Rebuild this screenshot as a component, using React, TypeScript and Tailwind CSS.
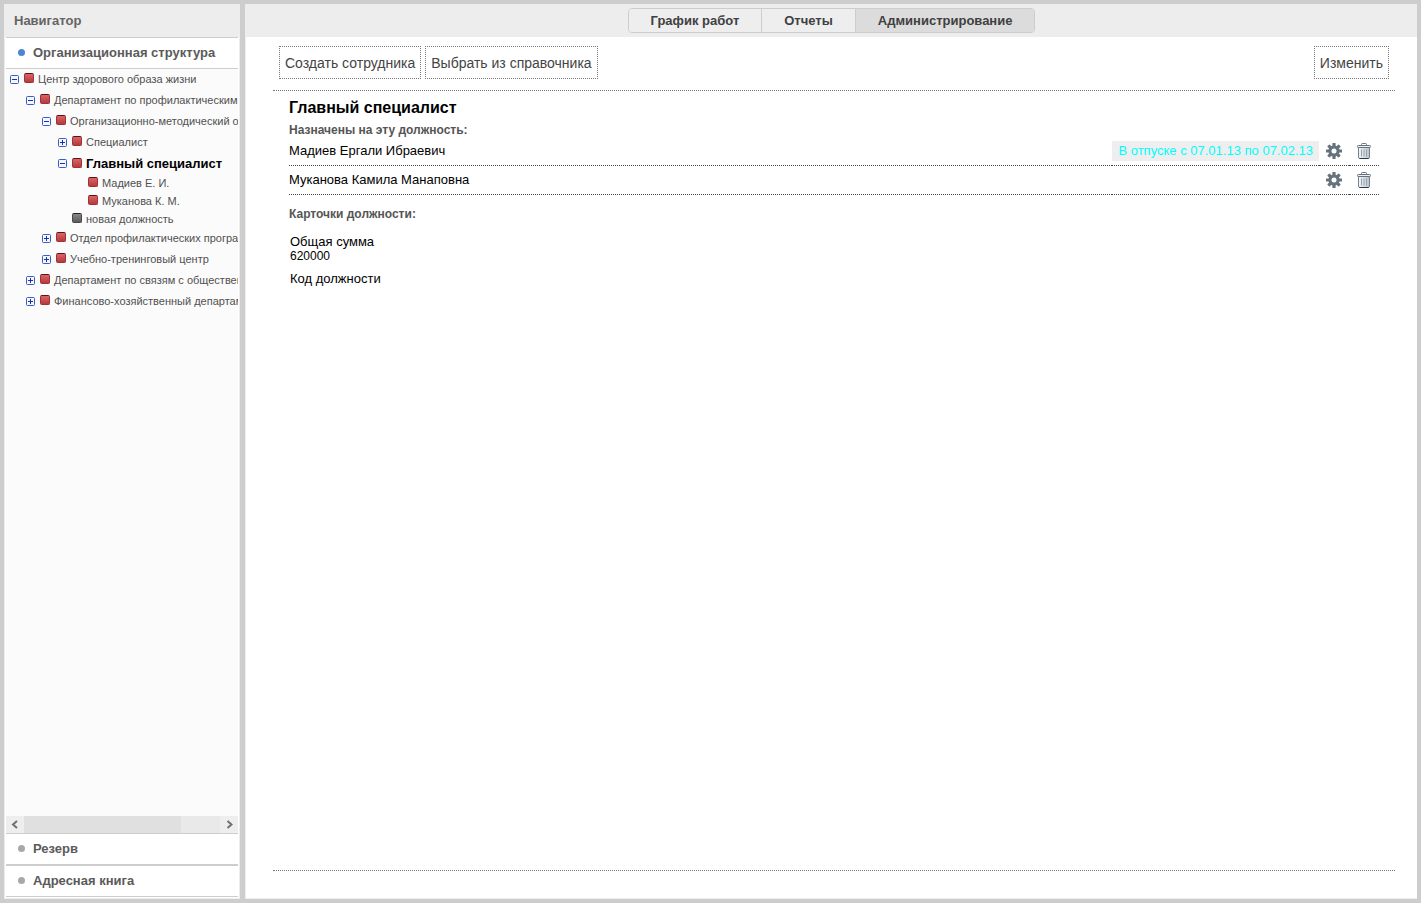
import { useState } from "react";

interface TreeNode {
  id: number;
  label: string;
  vacant?: boolean;
  leaf?: boolean;
  open?: boolean;
  children?: TreeNode[];
}

interface Employee {
  id: number;
  name: string;
  status: string | null;
}

const structure: TreeNode[] = [
  {
    id: 1,
    label: "Центр здорового образа жизни",
    open: true,
    children: [
      {
        id: 2,
        label: "Департамент по профилактическим программам",
        open: true,
        children: [
          {
            id: 3,
            label: "Организационно-методический отдел",
            open: true,
            children: [
              { id: 4, label: "Специалист" },
              {
                id: 5,
                label: "Главный специалист",
                open: true,
                children: [
                  { id: 6, label: "Мадиев Е. И.", leaf: true },
                  { id: 7, label: "Муканова К. М.", leaf: true },
                ],
              },
              { id: 8, label: "новая должность", leaf: true, vacant: true },
            ],
          },
          { id: 9, label: "Отдел профилактических программ" },
          { id: 10, label: "Учебно-тренинговый центр" },
        ],
      },
      { id: 11, label: "Департамент по связям с общественностью" },
      { id: 12, label: "Финансово-хозяйственный департамент" },
    ],
  },
];

const employees: Employee[] = [
  { id: 1, name: "Мадиев Ергали Ибраевич", status: "В отпуске с 07.01.13 по 07.02.13" },
  { id: 2, name: "Муканова Камила Манаповна", status: null },
];

const tabs = ["График работ", "Отчеты", "Администрирование"];

function GearIcon() {
  return (
    <svg width="16" height="16" viewBox="0 0 16 16" className="block">
      <g fill="#66727e">
        <rect x="6.4" y="0" width="3.2" height="16" rx="0.6" />
        <rect x="6.4" y="0" width="3.2" height="16" rx="0.6" transform="rotate(45 8 8)" />
        <rect x="6.4" y="0" width="3.2" height="16" rx="0.6" transform="rotate(90 8 8)" />
        <rect x="6.4" y="0" width="3.2" height="16" rx="0.6" transform="rotate(135 8 8)" />
        <circle cx="8" cy="8" r="5.6" />
      </g>
      <circle cx="8" cy="8" r="2.5" fill="#fff" />
    </svg>
  );
}

function TrashIcon() {
  return (
    <svg width="16" height="16" viewBox="0 0 16 16" className="block">
      <defs>
        <linearGradient id="bin" x1="0" x2="1" y1="0" y2="0">
          <stop offset="0" stopColor="#f6f8fa" />
          <stop offset="1" stopColor="#b8c2cc" />
        </linearGradient>
      </defs>
      <path d="M5.5 2.5V1.3Q5.5.5 6.300.5h3.400q.8 0 .8.8v1.200" fill="none" stroke="#6a7683" />
      <path d="M2.500 4.500h11V14q0 1.500-1.500 1.500H4q-1.500 0-1.500-1.500z" fill="url(#bin)" stroke="#75818d" />
      <path d="M3.500 15.500h9" stroke="#2c3948" />
      <rect x="1.500" y="2.500" width="13" height="2" rx="0.800" fill="#eef1f4" stroke="#66727e" />
      <path d="M5.500 6.500v7M8 6.500v7M10.500 6.500v7" stroke="#98a3ae" />
    </svg>
  );
}

function Expander({ open }: { open: boolean }) {
  return (
    <svg width="9" height="9" viewBox="0 0 9 9" className="block">
      <rect x="0.5" y="0.5" width="8" height="8" rx="1" fill="#f3f6fe" stroke="#3a5cc8" />
      <path d={open ? "M2 4.500h5" : "M2 4.500h5M4.500 2v5"} stroke="#1c3694" />
    </svg>
  );
}

function TreeItem({
  node,
  level,
  selected,
  onSelect,
}: {
  node: TreeNode;
  level: number;
  selected: number;
  onSelect: (id: number) => void;
}) {
  const [open, setOpen] = useState(!!node.open);
  const active = node.id === selected;

  return (
    <li>
      <div
        className={`flex items-center whitespace-nowrap pl-1 ${node.leaf ? "h-[18px]" : "h-[21px]"} ${
          node.leaf || active ? "" : "pb-px"
        }`}
        style={{ marginLeft: level * 16 }}
      >
        <span className="w-[14px] shrink-0">
          {!node.leaf && (
            <button className="block" aria-expanded={open} aria-label={node.label} onClick={() => setOpen(!open)}>
              <Expander open={open} />
            </button>
          )}
        </span>
        <span
          className={`mr-1 size-[10px] shrink-0 rounded-[2px] border bg-linear-to-b ${active ? "mb-px" : "mb-[3px]"} ${
            node.vacant
              ? "border-[#484848] border-t-[#222] from-[#888] to-[#5c5c5c]"
              : "border-[#a03236] border-t-[#5a1214] from-[#dc6464] to-[#b43a3e]"
          }`}
        />
        <button
          onClick={() => onSelect(node.id)}
          className={
            active ? "text-[13px] leading-4 font-bold text-black" : "text-[11px] leading-4 text-[#505050]"
          }
        >
          {node.label}
        </button>
      </div>
      {open && node.children && (
        <ul>
          {node.children.map((child) => (
            <TreeItem key={child.id} node={child} level={level + 1} selected={selected} onSelect={onSelect} />
          ))}
        </ul>
      )}
    </li>
  );
}

function SectionButton({ label, active = false }: { label: string; active?: boolean }) {
  return (
    <button className="flex h-8 w-full shrink-0 items-center gap-2 border-y border-[#cdcdcd] bg-white pl-3 text-[13px] font-bold text-[#5a5a5a]">
      <span className={`mb-0.5 size-[7px] rounded-full ${active ? "bg-[#4a86d4]" : "bg-[#a8a8a8]"}`} />
      {label}
    </button>
  );
}

function ScrollBar() {
  return (
    <div className="flex h-[17px] shrink-0 bg-[#e9e9e9]">
      <button aria-label="Влево" className="flex w-[18px] items-center justify-center bg-[#eee]">
        <svg width="8" height="9" viewBox="0 0 8 9">
          <path d="M6 1L2 4.500 6 8" fill="none" stroke="#707070" strokeWidth="2" />
        </svg>
      </button>
      <div className="flex-1">
        <div className="h-full w-4/5 bg-[#e0e0e0]" />
      </div>
      <button aria-label="Вправо" className="flex w-[18px] items-center justify-center bg-[#eee]">
        <svg width="8" height="9" viewBox="0 0 8 9">
          <path d="M2.500 1l4 3.500-4 3.500" fill="none" stroke="#707070" strokeWidth="2" />
        </svg>
      </button>
    </div>
  );
}

function ActionButton({ children }: { children: string }) {
  return (
    <button className="h-[33px] border border-dotted border-[#777] bg-white px-[5px] text-sm text-[#444]">
      {children}
    </button>
  );
}

export default function App() {
  const [selected, setSelected] = useState(5);
  const [tab, setTab] = useState(2);

  return (
    <div className="flex h-screen gap-[5px] bg-[#cdcdcd] p-1 font-['Liberation_Sans',Arial,sans-serif]">
      <aside className="flex w-[236px] shrink-0 flex-col border border-[#ededed] bg-white">
        <h2 className="h-8 shrink-0 bg-[#ededed] pl-[9px] text-[13px] leading-8 font-bold text-[#646464]">Навигатор</h2>
        <div className="flex min-h-0 flex-1 flex-col px-px pb-px">
          <SectionButton label="Организационная структура" active />
          <nav className="min-h-0 flex-1 overflow-hidden bg-[#fbfbfb]">
            <ul>
              {structure.map((node) => (
                <TreeItem key={node.id} node={node} level={0} selected={selected} onSelect={setSelected} />
              ))}
            </ul>
          </nav>
          <ScrollBar />
          <SectionButton label="Резерв" />
          <SectionButton label="Адресная книга" />
        </div>
      </aside>

      <main className="flex min-w-0 flex-1 flex-col border-b border-l border-[#ededed] bg-white">
        <header className="flex h-[33px] shrink-0 items-center justify-center bg-[#ededed]">
          <div className="flex h-[25px] divide-x divide-[#cdcdcd] overflow-hidden rounded border border-[#cdcdcd]">
            {tabs.map((label, i) => (
              <button
                key={label}
                onClick={() => setTab(i)}
                className={`px-[22px] text-[13px] font-bold text-[#404040] ${i === tab ? "bg-[#dcdcdc]" : "bg-[#eee]"}`}
              >
                {label}
              </button>
            ))}
          </div>
        </header>

        <div className="mr-[22px] mb-[27px] ml-[27px] flex flex-1 flex-col border-b border-dotted border-[#777]">
          <div className="flex gap-1 border-b border-dotted border-[#777] px-[6px] pt-[9px] pb-[11px]">
            <ActionButton>Создать сотрудника</ActionButton>
            <ActionButton>Выбрать из справочника</ActionButton>
            <div className="ml-auto">
              <ActionButton>Изменить</ActionButton>
            </div>
          </div>

          <div className="px-4 pt-[7px]">
            <h1 className="text-base leading-5 font-bold text-black">Главный специалист</h1>
            <h3 className="pt-[5px] text-xs leading-[14px] font-bold text-[#555]">Назначены на эту должность:</h3>
            <table className="w-full border-separate border-spacing-0 text-[13px] leading-5 text-black">
              <tbody>
                {employees.map((e) => (
                  <tr key={e.id} className="h-[29px] *:border-b *:border-dotted *:border-[#444]">
                    <td className="w-full">{e.name}</td>
                    <td className="whitespace-nowrap">
                      {e.status && (
                        <span className="inline-block bg-[#eee] px-[6px] align-top text-[#0ff]">{e.status}</span>
                      )}
                    </td>
                    <td className="pr-[7px] pl-[7px]">
                      <button className="block" aria-label="Настройки">
                        <GearIcon />
                      </button>
                    </td>
                    <td className="pr-[7px] pl-[7px]">
                      <button className="block" aria-label="Удалить">
                        <TrashIcon />
                      </button>
                    </td>
                  </tr>
                ))}
              </tbody>
            </table>

            <h3 className="pt-3 text-xs leading-[14px] font-bold text-[#555]">Карточки должности:</h3>
            <dl className="px-px pt-[13px] text-black">
              <dt className="text-[13px] leading-4">Общая сумма</dt>
              <dd className="text-xs leading-3">620000</dd>
              <dt className="pt-[9px] text-[13px] leading-4">Код должности</dt>
            </dl>
          </div>
        </div>
      </main>
    </div>
  );
}
